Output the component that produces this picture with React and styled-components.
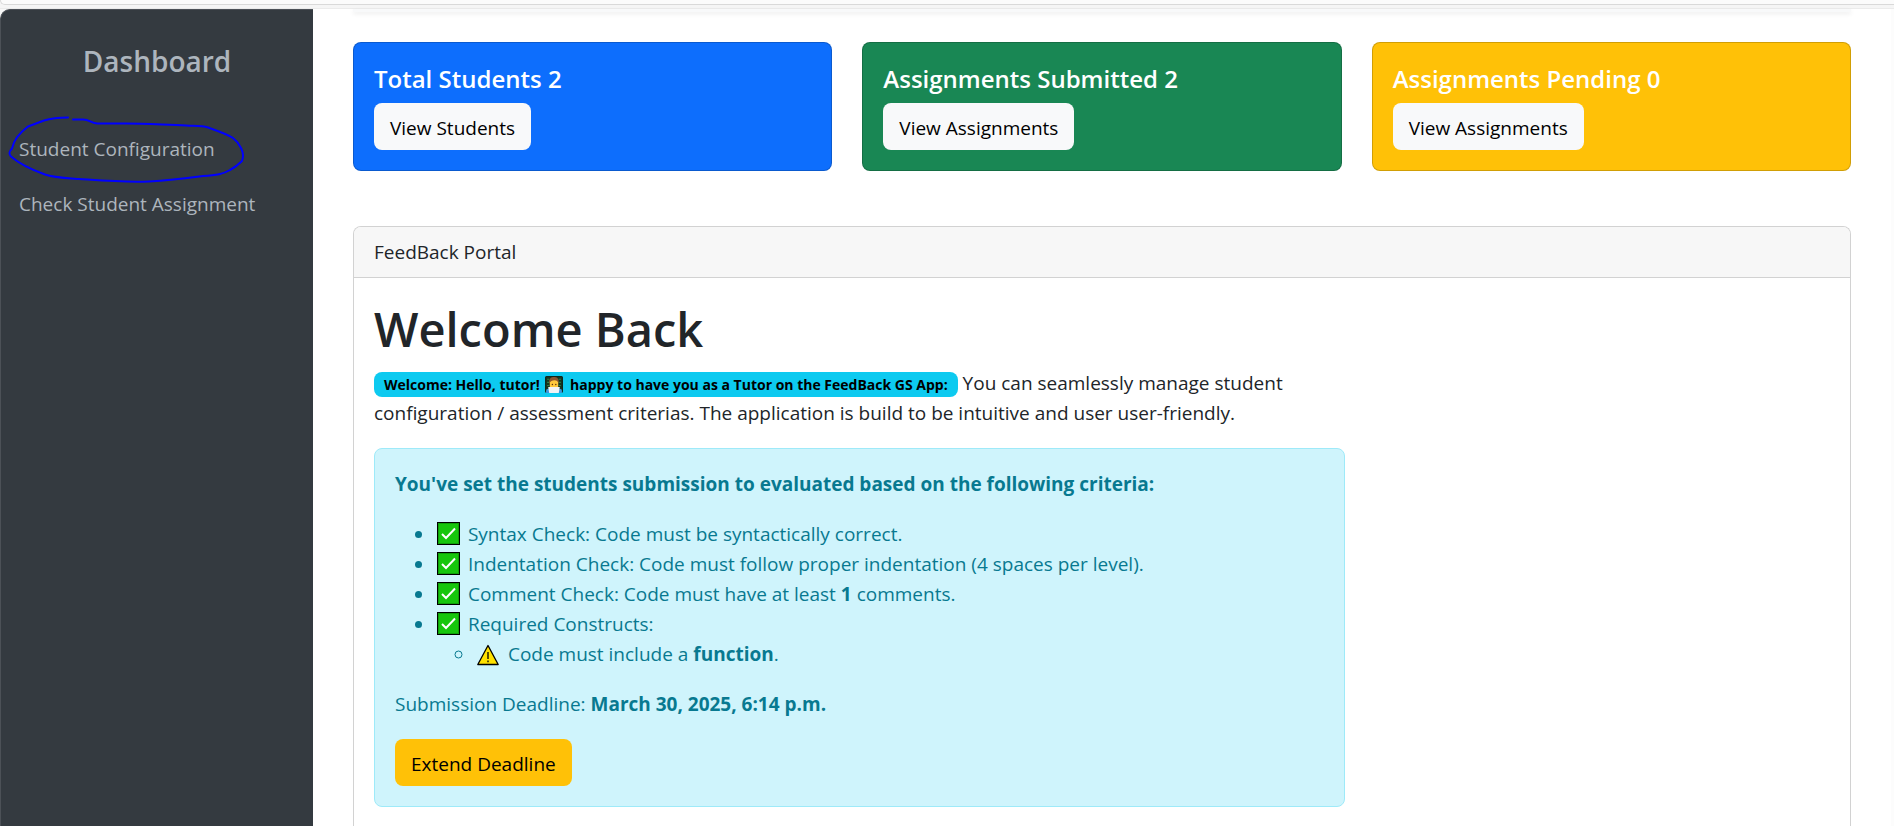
import React from 'react';
import styled, { createGlobalStyle } from 'styled-components';

const GlobalStyle = createGlobalStyle`
  *, *::before, *::after { box-sizing: border-box; }
  body {
    margin: 0;
    font-family: "Open Sans", "Noto Sans", sans-serif;
    font-size: 19px;
    line-height: 30px;
    color: #212529;
    background: #f8f8f8;
  }
  h1, h2, h3, p, ul { margin: 0; }
  strong { font-weight: 700; }
`;

const Shell = styled.div`
  display: flex;
  flex-direction: column;
  height: 100vh;
  overflow: hidden;
`;

const BrowserEdge = styled.div`
  flex: none;
  height: 9px;
  background: #f5f5f5;
  border-bottom: 1px solid #ebebeb;

  &::before {
    content: "";
    display: block;
    height: 5px;
    background: #fbfbfb;
    border-bottom: 1px solid #d9d9d9;
    border-left: 1px solid #d9d9d9;
    border-bottom-left-radius: 8px;
  }
`;

const Layout = styled.div`
  flex: 1;
  display: flex;
  min-height: 0;
`;

const Sidebar = styled.aside`
  position: relative;
  flex: none;
  width: 313px;
  padding-top: 33px;
  background: #343a40;
  border-top: 1px solid #4c5157;
  border-left: 1px solid #4c5157;
  border-top-left-radius: 10px;
  color: #adb5bd;
`;

const Brand = styled.h2`
  margin-bottom: 43px;
  font-size: 28px;
  line-height: 36px;
  font-weight: 600;
  text-align: center;
`;

const NavLink = styled.a`
  display: block;
  padding: 12px 18px;
  line-height: 31px;
  color: inherit;
  text-decoration: none;
`;

const Scribble = styled.svg`
  position: absolute;
  top: 104px;
  left: 4px;
  width: 244px;
  height: 74px;
  pointer-events: none;
`;

const Main = styled.main`
  flex: 1;
  display: flex;
  flex-direction: column;
  min-width: 0;
  padding: 0 40px;
  background: #fff;
  border-right: 3px solid #fcfcfc;
`;

const HeaderEdge = styled.div`
  flex: none;
  height: 3px;
  margin-bottom: 30px;
  background: #f8f9fa;
  box-shadow: 0 2px 4px rgba(0, 0, 0, 0.08);
`;

const Stats = styled.div`
  flex: none;
  display: grid;
  grid-template-columns: repeat(3, 1fr);
  gap: 30px;
  margin-bottom: 55px;
`;

const StatCard = styled.section`
  padding: 20px;
  background: ${(p) => p.$color};
  border: 1px solid rgba(0, 0, 0, 0.18);
  border-radius: 8px;
  color: #fff;
`;

const StatTitle = styled.h3`
  margin-bottom: 8px;
  font-size: 24px;
  line-height: 32px;
  font-weight: 600;
`;

const Button = styled.button`
  display: block;
  height: 47px;
  padding: 2px 16px 0;
  border: 0;
  border-radius: 8px;
  background: ${(p) => (p.$warning ? '#ffc107' : '#f8f9fa')};
  color: #000;
  font: inherit;
`;

const Portal = styled.section`
  flex: 1;
  border: 1px solid #d2d2d2;
  border-bottom: 0;
  border-radius: 8px 8px 0 0;
`;

const PortalHeader = styled.header`
  padding: 10px 20px;
  background: #f7f7f7;
  border-bottom: 1px solid #d2d2d2;
  border-radius: 7px 7px 0 0;
`;

const PortalBody = styled.div`
  padding: 20px;
`;

const Column = styled.div`
  width: calc(100% * 2 / 3);
`;

const Title = styled.h1`
  margin-bottom: 8px;
  font-size: 47px;
  line-height: 62px;
  font-weight: 600;
`;

const Intro = styled.p`
  margin-bottom: 20px;
`;

const Badge = styled.span`
  display: inline-block;
  padding: 0 10px;
  border-radius: 8px;
  background: #0dcaf0;
  color: #000;
  font-size: 14px;
  line-height: 25px;
  font-weight: 700;
`;

const Alert = styled.div`
  display: flex;
  flex-direction: column;
  align-items: flex-start;
  gap: 20px;
  padding: 20px;
  background: #cff4fc;
  border: 1px solid #9eeaf9;
  border-radius: 8px;
  color: #087990;
`;

const List = styled.ul`
  padding-left: 40px;
`;

const Emoji = styled.svg`
  width: ${(p) => p.$size}px;
  height: ${(p) => p.$size}px;
  margin: 0 ${(p) => p.$gap}px 0 2px;
  vertical-align: ${(p) => (p.$size > 20 ? -5 : -4)}px;
`;

const CheckMark = () => (
  <Emoji $size={24} $gap={2} viewBox="0 0 24 24" aria-hidden="true">
    <rect x="0.5" y="0.5" width="22" height="22" fill="#16c60c" stroke="#000" />
    <path d="M1.5 1.5h20v20h-20z" fill="none" stroke="#0fa008" />
    <path d="M5 12l4 4 9-9.500" fill="none" stroke="#fff" strokeWidth="2" />
  </Emoji>
);

const WarningSign = () => (
  <Emoji $size={22} $gap={4} viewBox="0 0 22 22" aria-hidden="true">
    <path d="M11 1.500L21.200 20.500H.8z" fill="#ffe100" stroke="#000" strokeWidth="1.300" strokeLinejoin="round" />
    <path d="M11 8v7M11 16.500v1.800" stroke="#000" strokeWidth="1.300" />
  </Emoji>
);

const Technologist = () => (
  <Emoji $size={18} $gap={3} viewBox="0 0 17 17" aria-hidden="true">
    <rect x="0.500" y="0.500" width="16" height="15" rx="1" fill="#16351f" stroke="#10271a" />
    <path d="M2 3h2M2 6h2M2 9h2M13 3h2M13 6h2M13 9h2" stroke="#2f8048" />
    <path d="M4.500 6.500a4 4 0 018 0v3a4 4 0 01-8 0z" fill="#ffc83d" />
    <path d="M4 7c-.5-5 2-6 4.500-6s5 1 4.500 6c-1-2-2-3-4-3s-4 1-5 3z" fill="#8e562e" />
    <circle cx="7" cy="8" r=".7" fill="#5b3215" />
    <circle cx="10.200" cy="8" r=".7" fill="#5b3215" />
    <path d="M1 16v-2q0-2 2-2h11q2 0 2 2v2z" fill="#3a96dd" />
    <path d="M3 10.500h11l-1 5.500H4z" fill="#f1f3f6" />
  </Emoji>
);

const stats = [
  { title: 'Total Students 2', action: 'View Students', color: '#0d6efd' },
  { title: 'Assignments Submitted 2', action: 'View Assignments', color: '#198754' },
  { title: 'Assignments Pending 0', action: 'View Assignments', color: '#ffc107' },
];

export default function App() {
  return (
    <Shell>
      <GlobalStyle />
      <BrowserEdge />
      <Layout>
        <Sidebar>
          <Brand>Dashboard</Brand>
          <nav>
            <NavLink href="#students">Student Configuration</NavLink>
            <NavLink href="#assignments">Check Student Assignment</NavLink>
          </nav>
          <Scribble viewBox="5 114 244 74" aria-hidden="true">
            <path
              d="M68 117.500c-8 0-16 .5-24 3l-16 6c-8 6-14 12-16 22-3 3-3.500 5-1 8 8 7 20 13 34 18 8 3 20 3.500 34 4.500 22 1.500 44 3.500 70 2.500 20-1 32-2.500 54-5.500 14-.5 20-2 27-6 6-3 9-6 12-9 1.500-4 1-9-1-13-2-4-4-7-8-10-6-4-15-7-25-10.500-6-2-12-1.500-22-2-20-.5-40-2-60-2H97c-7-.500-7-4-14-4H73"
              fill="none"
              stroke="#0000ff"
              strokeWidth="2"
              strokeLinecap="round"
              strokeLinejoin="round"
            />
          </Scribble>
        </Sidebar>
        <Main>
          <HeaderEdge />
          <Stats>
            {stats.map((s) => (
              <StatCard key={s.title} $color={s.color}>
                <StatTitle>{s.title}</StatTitle>
                <Button type="button">{s.action}</Button>
              </StatCard>
            ))}
          </Stats>
          <Portal>
            <PortalHeader>FeedBack Portal</PortalHeader>
            <PortalBody>
              <Column>
                <Title>Welcome Back</Title>
                <Intro>
                  <Badge>
                    Welcome: Hello, tutor! <Technologist /> happy to have you as a Tutor on the FeedBack GS App:
                  </Badge>{' '}
                  You can seamlessly manage student configuration / assessment criterias. The application is build to
                  be intuitive and user user-friendly.
                </Intro>
                <Alert>
                  <p>
                    <strong>You've set the students submission to evaluated based on the following criteria:</strong>
                  </p>
                  <List>
                    <li><CheckMark /> Syntax Check: Code must be syntactically correct.</li>
                    <li><CheckMark /> Indentation Check: Code must follow proper indentation (4 spaces per level).</li>
                    <li><CheckMark /> Comment Check: Code must have at least <strong>1</strong> comments.</li>
                    <li>
                      <CheckMark /> Required Constructs:
                      <List>
                        <li><WarningSign /> Code must include a <strong>function</strong>.</li>
                      </List>
                    </li>
                  </List>
                  <p>
                    Submission Deadline: <strong>March 30, 2025, 6:14 p.m.</strong>
                  </p>
                  <Button type="button" $warning>Extend Deadline</Button>
                </Alert>
              </Column>
            </PortalBody>
          </Portal>
        </Main>
      </Layout>
    </Shell>
  );
}
